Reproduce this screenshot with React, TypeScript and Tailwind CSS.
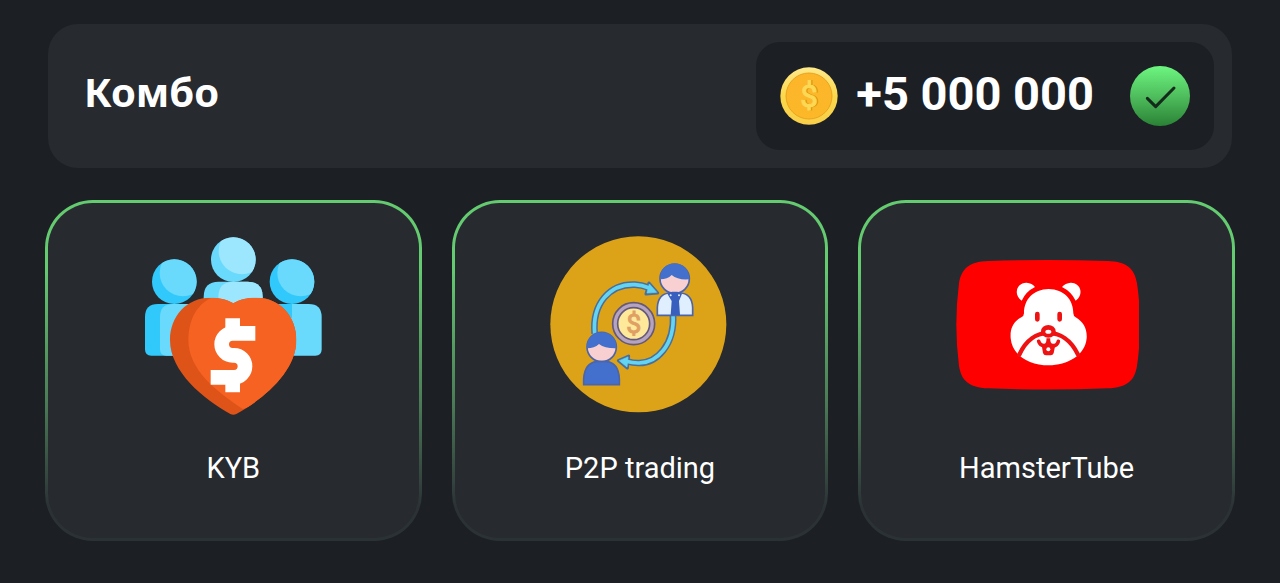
import React from "react";

interface ComboCard {
  title: string;
  icon: React.ReactNode;
}

function CoinIcon() {
  return (
    <svg viewBox="0 0 174 174" className="size-[58px] shrink-0" aria-hidden="true">
      <defs>
        <linearGradient id="coin-rim" x1="0" y1="0" x2="0" y2="1">
          <stop offset="0" stopColor="#ffe98a" />
          <stop offset="0.5" stopColor="#fbd84b" />
          <stop offset="1" stopColor="#f9cf49" />
        </linearGradient>
        <linearGradient id="coin-face" x1="0" y1="0" x2="0" y2="1">
          <stop offset="0" stopColor="#fdb52a" />
          <stop offset="1" stopColor="#fcb829" />
        </linearGradient>
      </defs>
      <circle cx="87" cy="87" r="86" fill="url(#coin-rim)" />
      <circle cx="87" cy="87" r="69" fill="url(#coin-face)" stroke="#e9a41f" strokeWidth="3" />
      <g fontFamily="Roboto, sans-serif" fontSize="94" textAnchor="middle">
        <text x="91" y="121" fill="#dd9412" stroke="#dd9412" strokeWidth="3">$</text>
        <text x="87" y="119" fill="#fcd955" stroke="#fcd955" strokeWidth="3">$</text>
      </g>
    </svg>
  );
}

function DoneIcon() {
  return (
    <svg viewBox="0 0 180 180" className="size-[60px] shrink-0" role="img" aria-label="OK">
      <defs>
        <linearGradient id="done-fill" x1="0" y1="0" x2="0" y2="1">
          <stop offset="0" stopColor="#6df580" />
          <stop offset="0.5" stopColor="#4fbe5d" />
          <stop offset="1" stopColor="#2a8235" />
        </linearGradient>
      </defs>
      <circle cx="90" cy="90" r="90" fill="url(#done-fill)" />
      <path
        d="M52 97 L77 122 L132 66"
        fill="none"
        stroke="#142a1b"
        strokeWidth="9"
        strokeLinecap="round"
        strokeLinejoin="round"
      />
    </svg>
  );
}

function KybIcon() {
  return (
    <svg viewBox="33 21 552 552" className="size-[184px]" aria-hidden="true">
      <defs>
        <clipPath id="kyb-left">
          <circle cx="133" cy="170" r="67" />
        </clipPath>
        <clipPath id="kyb-mid">
          <circle cx="310" cy="104" r="67" />
        </clipPath>
        <clipPath id="kyb-right">
          <circle cx="486" cy="170" r="67" />
        </clipPath>
        <clipPath id="kyb-heart">
          <path d="M310 235 C290 222 265 218 240 218 C172 218 120 272 120 345 C120 440 220 522 301 567 Q310 572 319 567 C400 522 499 440 499 345 C499 272 448 218 380 218 C355 218 330 222 310 235 Z" />
        </clipPath>
      </defs>

      <g clipPath="url(#kyb-left)">
        <rect x="60" y="100" width="146" height="140" fill="#31c9fb" />
        <circle cx="159" cy="144" r="70" fill="#69d9fc" />
      </g>
      <g clipPath="url(#kyb-mid)">
        <rect x="240" y="35" width="140" height="140" fill="#69d9fc" />
        <circle cx="336" cy="78" r="70" fill="#9ce7fd" />
      </g>
      <g clipPath="url(#kyb-right)">
        <rect x="415" y="100" width="146" height="140" fill="#31c9fb" />
        <circle cx="512" cy="144" r="70" fill="#69d9fc" />
      </g>

      <path d="M84 237 H230 V392 H64 Q45 392 45 373 V276 Q45 237 84 237 Z" fill="#31c9fb" />
      <path d="M129 237 H240 V392 H109 Q90 392 90 373 V276 Q90 237 129 237 Z" fill="#69d9fc" />
      <path d="M400 237 H536 Q575 237 575 276 V373 Q575 392 556 392 H400 Z" fill="#69d9fc" />
      <path d="M440 237 H486 V280 Z" fill="#31c9fb" />
      <path d="M221 240 V216 Q221 170 266 170 H353 Q398 170 398 216 V240 Z" fill="#69d9fc" />
      <path d="M265 240 V216 Q265 170 310 170 H353 Q398 170 398 216 V240 Z" fill="#9ce7fd" />

      <g clipPath="url(#kyb-heart)">
        <rect x="115" y="210" width="390" height="370" fill="#dd5318" />
        <path
          d="M250 216 C205 233 175 280 175 345 C175 435 260 500 338 552 L510 500 V210 Z"
          fill="#f56221"
        />
      </g>

      <g fill="none" stroke="#ffffff" strokeWidth="44">
        <path d="M376 325 H308 A33 33 0 0 0 308 391 H312 A33 33 0 0 1 312 457 H242" />
        <path d="M308 280 V327 M308 455 V502" />
      </g>
    </svg>
  );
}

function P2PIcon() {
  return (
    <svg viewBox="24 21 552 552" className="size-[184px]" aria-hidden="true">
      <circle cx="295" cy="298" r="264" fill="#dca319" />

      {/* exchange arrows */}
      <g fill="none" stroke="#4a6f9b" strokeWidth="20">
        <path d="M164 326 C156 235 210 176 285 179 Q305 180 324 187" />
        <path d="M399 268 C405 360 350 416 294 414 Q278 414 262 409" />
      </g>
      <g fill="#4a6f9b" stroke="#4a6f9b" strokeWidth="9" strokeLinejoin="round">
        <path d="M327 174 L353 204 L318 207 Z" />
        <path d="M266 393 L235 407 L262 429 Z" />
      </g>
      <g fill="none" stroke="#63d5f2" strokeWidth="11">
        <path d="M164 326 C156 235 210 176 285 179 Q305 180 328 189" />
        <path d="M399 268 C405 360 350 416 294 414 Q278 414 258 409" />
      </g>
      <g fill="#63d5f2" stroke="#63d5f2" strokeWidth="2" strokeLinejoin="round">
        <path d="M328 177 L350 202 L321 204 Z" />
        <path d="M264 396 L238 407 L261 426 Z" />
      </g>

      {/* coin */}
      <circle cx="281" cy="296" r="63" fill="#b5a3bf" stroke="#65597b" strokeWidth="5" />
      <circle cx="281" cy="296" r="48" fill="#fee89a" stroke="#65597b" strokeWidth="5" />
      <text
        x="281"
        y="324"
        textAnchor="middle"
        fontFamily="Roboto, sans-serif"
        fontSize="80"
        fill="#e0a064"
        stroke="#e0a064"
        strokeWidth="3"
      >
        $
      </text>

      {/* person with a tie */}
      <circle cx="404" cy="161" r="44" fill="#f9d0d1" stroke="#4c64a8" strokeWidth="5" />
      <path
        d="M361 163 C356 100 452 100 447 163 Q414 166 395 150 Q382 163 361 163 Z"
        fill="#4370cd"
      />
      <path
        d="M352 271 V248 Q354 206 389 204 H421 Q456 206 458 248 V271 Z"
        fill="#e0effe"
        stroke="#4c64a8"
        strokeWidth="5"
      />
      <path d="M382 206 L396 200 H412 L426 206 L417 228 L420 270 H392 L395 228 Z" fill="#395fbe" />
      <circle cx="392" cy="211" r="3" fill="#e0effe" />
      <circle cx="417" cy="211" r="3" fill="#e0effe" />

      {/* person in blue */}
      <circle cx="185" cy="366" r="44" fill="#f9d0d1" stroke="#4c64a8" strokeWidth="5" />
      <path
        d="M141 370 C136 306 234 306 229 370 Q195 371 177 357 Q163 370 141 370 Z"
        fill="#4370cd"
      />
      <path
        d="M131 479 V462 Q134 414 170 410 H200 Q236 414 238 462 V479 Z"
        fill="#4370cd"
        stroke="#4c64a8"
        strokeWidth="5"
      />
    </svg>
  );
}

function HamsterTubeIcon() {
  return (
    <svg viewBox="45 -39 552 552" className="size-[184px]" aria-hidden="true">
      <path
        d="M145 48 Q324 42 503 48 C562 50 584 72 591 115 Q609 239 591 363 C584 406 562 428 503 430 Q324 437 145 430 C86 428 64 406 57 363 Q41 239 57 115 C64 72 86 50 145 48 Z"
        fill="#ff0000"
      />
      <g fill="#ffffff">
        <path d="M245 167 C218 148 231 112 260 113 Q276 114 285 126 Q257 140 245 167 Z" />
        <path d="M407 167 C434 148 421 112 392 113 Q376 114 366 126 Q394 140 407 167 Z" />
        <path d="M326 132 C280 133 252 163 252 205 Q252 213 244 217 C218 231 210 253 212 280 C216 332 270 361 326 361 C382 361 435 332 440 280 C442 253 431 231 407 217 Q400 213 400 205 C400 163 372 133 326 132 Z" />
      </g>
      <g fill="none" stroke="#ee1212" strokeLinecap="round">
        <path d="M292 207 V223 M359 207 V223" strokeWidth="14" />
        <path d="M238 329 C258 284 291 264 325 264 C359 264 393 284 414 329" strokeWidth="13" />
        <path d="M296 289 Q300 302 312 302 Q325 302 325 280 Q325 302 339 302 Q352 302 355 289" strokeWidth="11" />
      </g>
      <ellipse cx="325" cy="259" rx="22" ry="19" fill="#ee1212" />
      <ellipse cx="325" cy="260" rx="9" ry="6" fill="#ffffff" />
      <path d="M305 300 H346 L341 324 Q339 331 332 331 H318 Q311 331 309 324 Z" fill="#ee1212" />
      <circle cx="325" cy="313" r="6" fill="#ffffff" />
    </svg>
  );
}

const cards: ComboCard[] = [
  { title: "KYB", icon: <KybIcon /> },
  { title: "P2P trading", icon: <P2PIcon /> },
  { title: "HamsterTube", icon: <HamsterTubeIcon /> },
];

export default function App() {
  return (
    <main className="min-h-screen bg-[#1c1f24] px-[45px] py-6 text-white">
      <header className="mx-[3px] flex items-center justify-between rounded-[30px] bg-[#272a2f] py-[18px] pr-[18px] pl-9">
        <h1 className="pb-2 font-['Noto_Sans',sans-serif] text-[40px] leading-[56px] font-bold">Комбо</h1>
        <div className="flex items-center rounded-[24px] bg-[#1c1f24] px-6 py-6 font-['Roboto',sans-serif]">
          <CoinIcon />
          <span className="ml-[18px] pb-1 text-[47px] leading-[56px] font-bold whitespace-nowrap">
            +5 000 000
          </span>
          <span className="ml-9 flex">
            <DoneIcon />
          </span>
        </div>
      </header>

      <ul className="mt-8 grid grid-cols-3 gap-[30px]">
        {cards.map((card) => (
          <li
            key={card.title}
            className="rounded-[48px] bg-linear-to-b from-[#64cb70] from-20% via-[#4a7a55] via-60% to-[#2b3235] to-90% p-[3px]"
          >
            <div className="flex flex-col items-center rounded-[45px] bg-[#272a2f] pt-[29px] pb-[50px]">
              {card.icon}
              <h2 className="mt-8 font-['Roboto',sans-serif] text-[29px] leading-10 font-normal">
                {card.title}
              </h2>
            </div>
          </li>
        ))}
      </ul>
    </main>
  );
}
